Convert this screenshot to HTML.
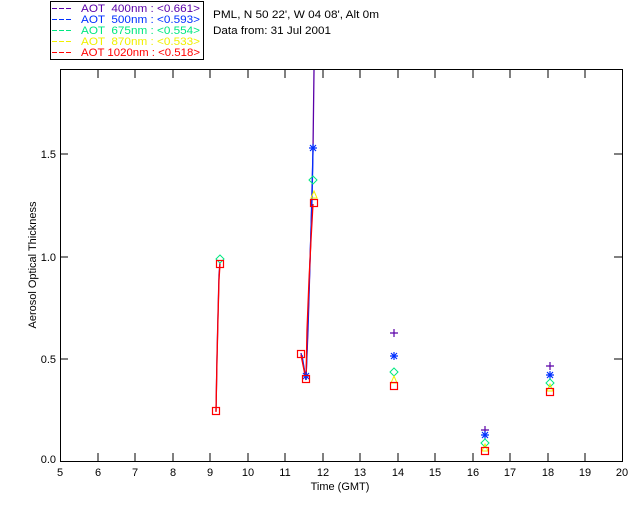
<!DOCTYPE html>
<html><head><style>
html,body{margin:0;padding:0;background:#fff;width:640px;height:512px;overflow:hidden}
text{font-family:"Liberation Sans",sans-serif;font-size:11px}
</style></head><body>
<svg width="640" height="512" viewBox="0 0 640 512" xmlns="http://www.w3.org/2000/svg">
<defs>
<g id="plus"><path d="M-4 0H4M0 -4V4" stroke="#5a00a8" stroke-width="1.2" fill="none"/></g>
<g id="star"><path d="M-4 0H4M0 -4V4M-3 -3L3 3M-3 3L3 -3" stroke="#0030ff" stroke-width="1.2" fill="none"/></g>
<g id="dia"><path d="M0 -4L4 0L0 4L-4 0Z" stroke="#00e880" stroke-width="1" fill="none"/></g>
<g id="tri"><path d="M0 -4L3 3H-3Z" stroke="#f0f000" stroke-width="1" fill="none"/></g>
<g id="sq"><rect x="-3.5" y="-3.5" width="7" height="7" stroke="#ff0000" stroke-width="1.2" fill="none"/></g>
</defs>
<!-- legend -->
<rect x="50.5" y="1.5" width="153" height="58" fill="none" stroke="#000"/>
<g font-size="11">
<path d="M52 8h22M52 19h22M52 30h22M52 41h22M52 52h22" stroke-dasharray="5 2" fill="none"/>
<path d="M52 8.5h21" stroke="#5a00a8" stroke-dasharray="5 2"/>
<path d="M52 19.5h21" stroke="#0030ff" stroke-dasharray="5 2"/>
<path d="M52 30.5h21" stroke="#00e880" stroke-dasharray="5 2"/>
<path d="M52 41.5h21" stroke="#f0f000" stroke-dasharray="5 2"/>
<path d="M52 52.5h21" stroke="#ff0000" stroke-dasharray="5 2"/>
<text x="81" y="12" fill="#5a00a8" xml:space="preserve" textLength="119" lengthAdjust="spacingAndGlyphs">AOT  400nm : &lt;0.661&gt;</text>
<text x="81" y="23" fill="#0030ff" xml:space="preserve" textLength="119" lengthAdjust="spacingAndGlyphs">AOT  500nm : &lt;0.593&gt;</text>
<text x="81" y="34" fill="#00e880" xml:space="preserve" textLength="119" lengthAdjust="spacingAndGlyphs">AOT  675nm : &lt;0.554&gt;</text>
<text x="81" y="45" fill="#f0f000" xml:space="preserve" textLength="119" lengthAdjust="spacingAndGlyphs">AOT  870nm : &lt;0.533&gt;</text>
<text x="81" y="56" fill="#ff0000" xml:space="preserve" textLength="119" lengthAdjust="spacingAndGlyphs">AOT 1020nm : &lt;0.518&gt;</text>
</g>
<text x="213" y="18" fill="#000" textLength="166" lengthAdjust="spacingAndGlyphs">PML, N 50 22', W 04 08', Alt 0m</text>
<text x="213" y="34" fill="#000" textLength="118" lengthAdjust="spacingAndGlyphs">Data from: 31 Jul 2001</text>
<!-- axes -->
<rect x="60.5" y="69.5" width="562" height="392" fill="none" stroke="#000"/>
<g stroke="#000">
<path d="M98 461v-8M135 461v-8M173 461v-8M210 461v-8M248 461v-8M285 461v-8M323 461v-8M360 461v-8M398 461v-8M435 461v-8M473 461v-8M510 461v-8M548 461v-8M585 461v-8"/>
<path d="M98 70v8M135 70v8M173 70v8M210 70v8M248 70v8M285 70v8M323 70v8M360 70v8M398 70v8M435 70v8M473 70v8M510 70v8M548 70v8M585 70v8"/>
<path d="M60 154h8M60 257h8M60 359h8M622 154h-8M622 257h-8M622 359h-8"/>
</g>
<g font-size="11" fill="#000" text-anchor="middle">
<text x="60" y="476">5</text><text x="98" y="476">6</text><text x="135" y="476">7</text><text x="173" y="476">8</text><text x="210" y="476">9</text><text x="248" y="476">10</text><text x="285" y="476">11</text><text x="323" y="476">12</text><text x="360" y="476">13</text><text x="398" y="476">14</text><text x="435" y="476">15</text><text x="473" y="476">16</text><text x="510" y="476">17</text><text x="548" y="476">18</text><text x="585" y="476">19</text><text x="622" y="476">20</text>
<text x="340" y="490">Time (GMT)</text>
</g>
<g font-size="11" fill="#000" text-anchor="end">
<text x="56" y="158">1.5</text><text x="56" y="261">1.0</text><text x="56" y="363">0.5</text><text x="56" y="463">0.0</text>
</g>
<text transform="translate(36 265) rotate(-90)" text-anchor="middle" font-size="10" fill="#000">Aerosol Optical Thickness</text>
<!-- lines -->
<g fill="none" stroke-width="1.3">
<path d="M216 411L217 356L218 314L219 275L220 262" stroke="#5a00a8"/>
<path d="M301 353L306 379L308 330L311 230L313 150L314 70" stroke="#5a00a8"/>
<path d="M302 355L306 380L308 320L312 200L313 150" stroke="#0030ff"/>
<path d="M216 412L217 360L218 318L219 280L220 264" stroke="#ff0000"/>
<path d="M301 355L306 380L307 330L309 280L311 240L313 204" stroke="#ff0000"/>
</g>
<use href="#sq" x="216" y="411"/><use href="#dia" x="220" y="259"/><use href="#sq" x="220" y="264"/>
<use href="#sq" x="301" y="354"/><use href="#star" x="306" y="376"/><use href="#sq" x="306" y="379"/>
<use href="#star" x="313" y="148"/><use href="#dia" x="313" y="180"/><use href="#tri" x="314" y="195"/><use href="#sq" x="314" y="203"/>
<use href="#plus" x="394" y="333"/><use href="#star" x="394" y="356"/><use href="#dia" x="394" y="372"/><use href="#tri" x="394" y="380"/><use href="#sq" x="394" y="386"/>
<use href="#plus" x="485" y="430"/><use href="#star" x="485" y="435"/><use href="#dia" x="485" y="443"/><use href="#tri" x="485" y="448"/><use href="#sq" x="485" y="451"/>
<use href="#plus" x="550" y="366"/><use href="#star" x="550" y="375"/><use href="#dia" x="550" y="383"/><use href="#tri" x="550" y="388"/><use href="#sq" x="550" y="392"/>
</svg>
</body></html>
